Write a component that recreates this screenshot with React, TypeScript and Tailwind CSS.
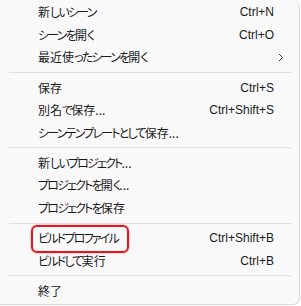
import React from 'react';

type Item = { label: string; shortcut?: string; submenu?: boolean };

const sections: Item[][] = [
  [
    { label: '新しいシーン', shortcut: 'Ctrl+N' },
    { label: 'シーンを開く', shortcut: 'Ctrl+O' },
    { label: '最近使ったシーンを開く', submenu: true },
  ],
  [
    { label: '保存', shortcut: 'Ctrl+S' },
    { label: '別名で保存...', shortcut: 'Ctrl+Shift+S' },
    { label: 'シーンテンプレートとして保存...' },
  ],
  [
    { label: '新しいプロジェクト...' },
    { label: 'プロジェクトを開く...' },
    { label: 'プロジェクトを保存' },
  ],
  [
    { label: 'ビルドプロファイル', shortcut: 'Ctrl+Shift+B' },
    { label: 'ビルドして実行', shortcut: 'Ctrl+B' },
  ],
  [{ label: '終了' }],
];

const jp = { fontFamily: '"Noto Sans CJK JP", "Noto Sans", sans-serif', fontFeatureSettings: '"palt"' };

// kana are narrower in the original UI font, so tighten only those
const Label = ({ text }: { text: string }) => (
  <span className="text-[12px] leading-none text-[#1a1a1a]" style={jp}>
    {Array.from(text).map((ch, i) =>
      /[\u3040-\u30ff]/.test(ch) ? (
        <span key={i} className="tracking-[-1.8px]">
          {ch}
        </span>
      ) : (
        <span key={i}>{ch}</span>
      )
    )}
  </span>
);

const MenuRow = ({ item }: { item: Item }) => (
  <div className={`flex h-[22.6px] items-center justify-between pl-[38px] ${item.submenu ? 'pr-[15px]' : 'pr-[25px]'}`}>
    <Label text={item.label} />
    {item.shortcut && (
      <span className="font-['Liberation_Sans',sans-serif] text-[12px] leading-none text-[#1a1a1a]">
        {item.shortcut}
      </span>
    )}
    {item.submenu && (
      <svg width="6" height="9" viewBox="0 0 6 9" fill="none" className="mt-[1px]">
        <path d="M1 1l3.5 3.5L1 8" stroke="#333" strokeWidth="1" />
      </svg>
    )}
  </div>
);

export default function App() {
  return (
    <div className="relative h-[306px] w-[301px] overflow-hidden bg-white">
      <div className="h-[305px] w-[300px] rounded-br-[7px] rounded-tr-[7px] border-b border-r border-[#d9d9d9] bg-[#f9f9f9] pt-[1px]">
        {sections.map((section, i) => (
          <div key={i}>
            {i > 0 && <div className="my-[3.25px] ml-[9px] h-px w-[282px] bg-[#e0e0e0]" />}
            {section.map((item) => (
              <MenuRow key={item.label} item={item} />
            ))}
          </div>
        ))}
      </div>
      {/* highlight annotation */}
      <div className="absolute left-[31px] top-[225px] h-[28px] w-[98px] rounded-[6px] border-2 border-[#e8131b] shadow-[0_0_2px_rgba(232,19,27,0.45)]" />
    </div>
  );
}
